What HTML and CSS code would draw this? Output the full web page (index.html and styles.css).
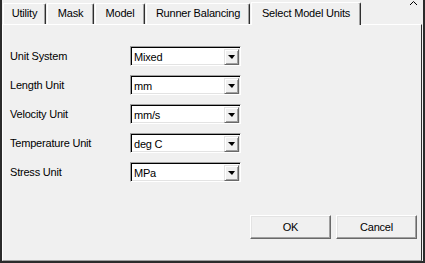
FILE: index.html
```html
<!DOCTYPE html>
<html lang="en">
<head>
    <meta charset="UTF-8">
    <meta name="viewport" content="width=device-width, initial-scale=1.0">
    <title>Select Model Units</title>
    <link rel="stylesheet" href="styles.css">
</head>
<body>

    <div class="window">
        <!-- Tab strip -->
        <div class="tabs">
            <div class="tab tab-utility">Utility</div>
            <div class="tab tab-mask">Mask</div>
            <div class="tab tab-model">Model</div>
            <div class="tab tab-runner">Runner Balancing</div>
            <div class="tab tab-units active">Select Model Units</div>
            <svg class="caret" width="9" height="6" viewBox="0 0 9 6">
                <polyline points="1,5 4.5,1.5 8,5" fill="none" stroke="#000" stroke-width="1"/>
            </svg>
        </div>

        <!-- Tab page -->
        <div class="panel">
            <div class="form">
                <label class="field-label">Unit System</label>
                <div class="combo"><span class="combo-value">Mixed</span><span class="combo-button"><span class="arrow"></span></span></div>

                <label class="field-label">Length Unit</label>
                <div class="combo"><span class="combo-value">mm</span><span class="combo-button"><span class="arrow"></span></span></div>

                <label class="field-label">Velocity Unit</label>
                <div class="combo"><span class="combo-value">mm/s</span><span class="combo-button"><span class="arrow"></span></span></div>

                <label class="field-label">Temperature Unit</label>
                <div class="combo"><span class="combo-value">deg C</span><span class="combo-button"><span class="arrow"></span></span></div>

                <label class="field-label">Stress Unit</label>
                <div class="combo"><span class="combo-value">MPa</span><span class="combo-button"><span class="arrow"></span></span></div>
            </div>

            <div class="actions">
                <button class="win-button">OK</button>
                <button class="win-button">Cancel</button>
            </div>
        </div>
    </div>

</body>
</html>
```

FILE: styles.css
```css
body {
    margin: 0;
    font-family: "Liberation Sans", Arial, sans-serif;
    font-size: 11px;
    letter-spacing: -0.2px;
    color: #000;
    background-color: #f0f0f0;
}
.window {
    position: relative;
    box-sizing: border-box;
    width: 425px;
    height: 263px;
    background-color: #f0f0f0;
    border-left: 2px solid #2b2b2b;
    border-right: 2px solid #2b2b2b;
    border-bottom: 2px solid #2b2b2b;
    display: flex;
    flex-direction: column;
}
.tabs {
    display: flex;
    align-items: flex-end;
    height: 24px;
    padding-left: 1px;
}
.tab {
    box-sizing: border-box;
    height: 21px;
    margin-right: 1px;
    padding-top: 3px;
    text-align: center;
    border-left: 1px solid #fff;
    border-top: 1px solid #fff;
    border-right: 1px solid #2f2f2f;
    border-top-right-radius: 2px;
    box-shadow: inset -1px 0 0 #a0a0a0;
}
.tab-utility { width: 43px; }
.tab-mask { width: 47px; }
.tab-model { width: 50px; }
.tab-runner { width: 104px; margin-right: 1px; }
.tab-units { width: 110px; }
.tab.active {
    height: 23px;
    margin-bottom: -1px;
    padding-top: 4px;
    background-color: #f0f0f0;
    position: relative;
    z-index: 1;
}
.caret {
    position: absolute;
    top: 0;
    right: 5px;
}
.panel {
    flex: 1;
    box-sizing: border-box;
    border-top: 1px solid #fff;
    border-left: 1px solid #fff;
    border-right: 1px solid #2f2f2f;
    border-bottom: 1px solid #a0a0a0;
    margin-right: 1px;
    padding: 21px 4px 0 7px;
}
.form {
    display: grid;
    grid-template-columns: 120px 111px;
    grid-auto-rows: 20px;
    row-gap: 9px;
    align-items: center;
}
.field-label {
    line-height: 20px;
}
.combo {
    box-sizing: border-box;
    height: 20px;
    display: flex;
    align-items: center;
    background-color: #fff;
    border-top: 1px solid #a0a0a0;
    border-left: 1px solid #a0a0a0;
    border-right: 1px solid #fff;
    border-bottom: 1px solid #fff;
    box-shadow: inset 1px 1px 0 #000, inset -1px -1px 0 #e3e3e3;
}
.combo-value {
    flex: 1;
    padding-left: 3px;
    padding-top: 1px;
}
.combo-button {
    box-sizing: border-box;
    width: 15px;
    height: 16px;
    margin-right: 1px;
    margin-top: 1px;
    display: flex;
    align-items: center;
    justify-content: center;
    background-color: #f0f0f0;
    border-top: 1px solid #e3e3e3;
    border-left: 1px solid #e3e3e3;
    border-right: 1px solid #696969;
    border-bottom: 1px solid #696969;
    box-shadow: inset 1px 1px 0 #fff, inset -1px -1px 0 #a0a0a0;
}
.arrow {
    width: 0;
    height: 0;
    border-left: 4px solid transparent;
    border-right: 3px solid transparent;
    border-top: 4px solid #000;
}
.actions {
    display: flex;
    justify-content: flex-end;
    gap: 5px;
    margin-top: 33px;
}
.win-button {
    box-sizing: border-box;
    width: 81px;
    height: 24px;
    padding: 0;
    font-family: inherit;
    font-size: 11px;
    letter-spacing: -0.2px;
    color: #000;
    background-color: #f0f0f0;
    border-top: 1px solid #fff;
    border-left: 1px solid #fff;
    border-right: 1px solid #696969;
    border-bottom: 1px solid #696969;
    box-shadow: inset -1px -1px 0 #a0a0a0, inset 1px 1px 0 #e3e3e3;
}
```
